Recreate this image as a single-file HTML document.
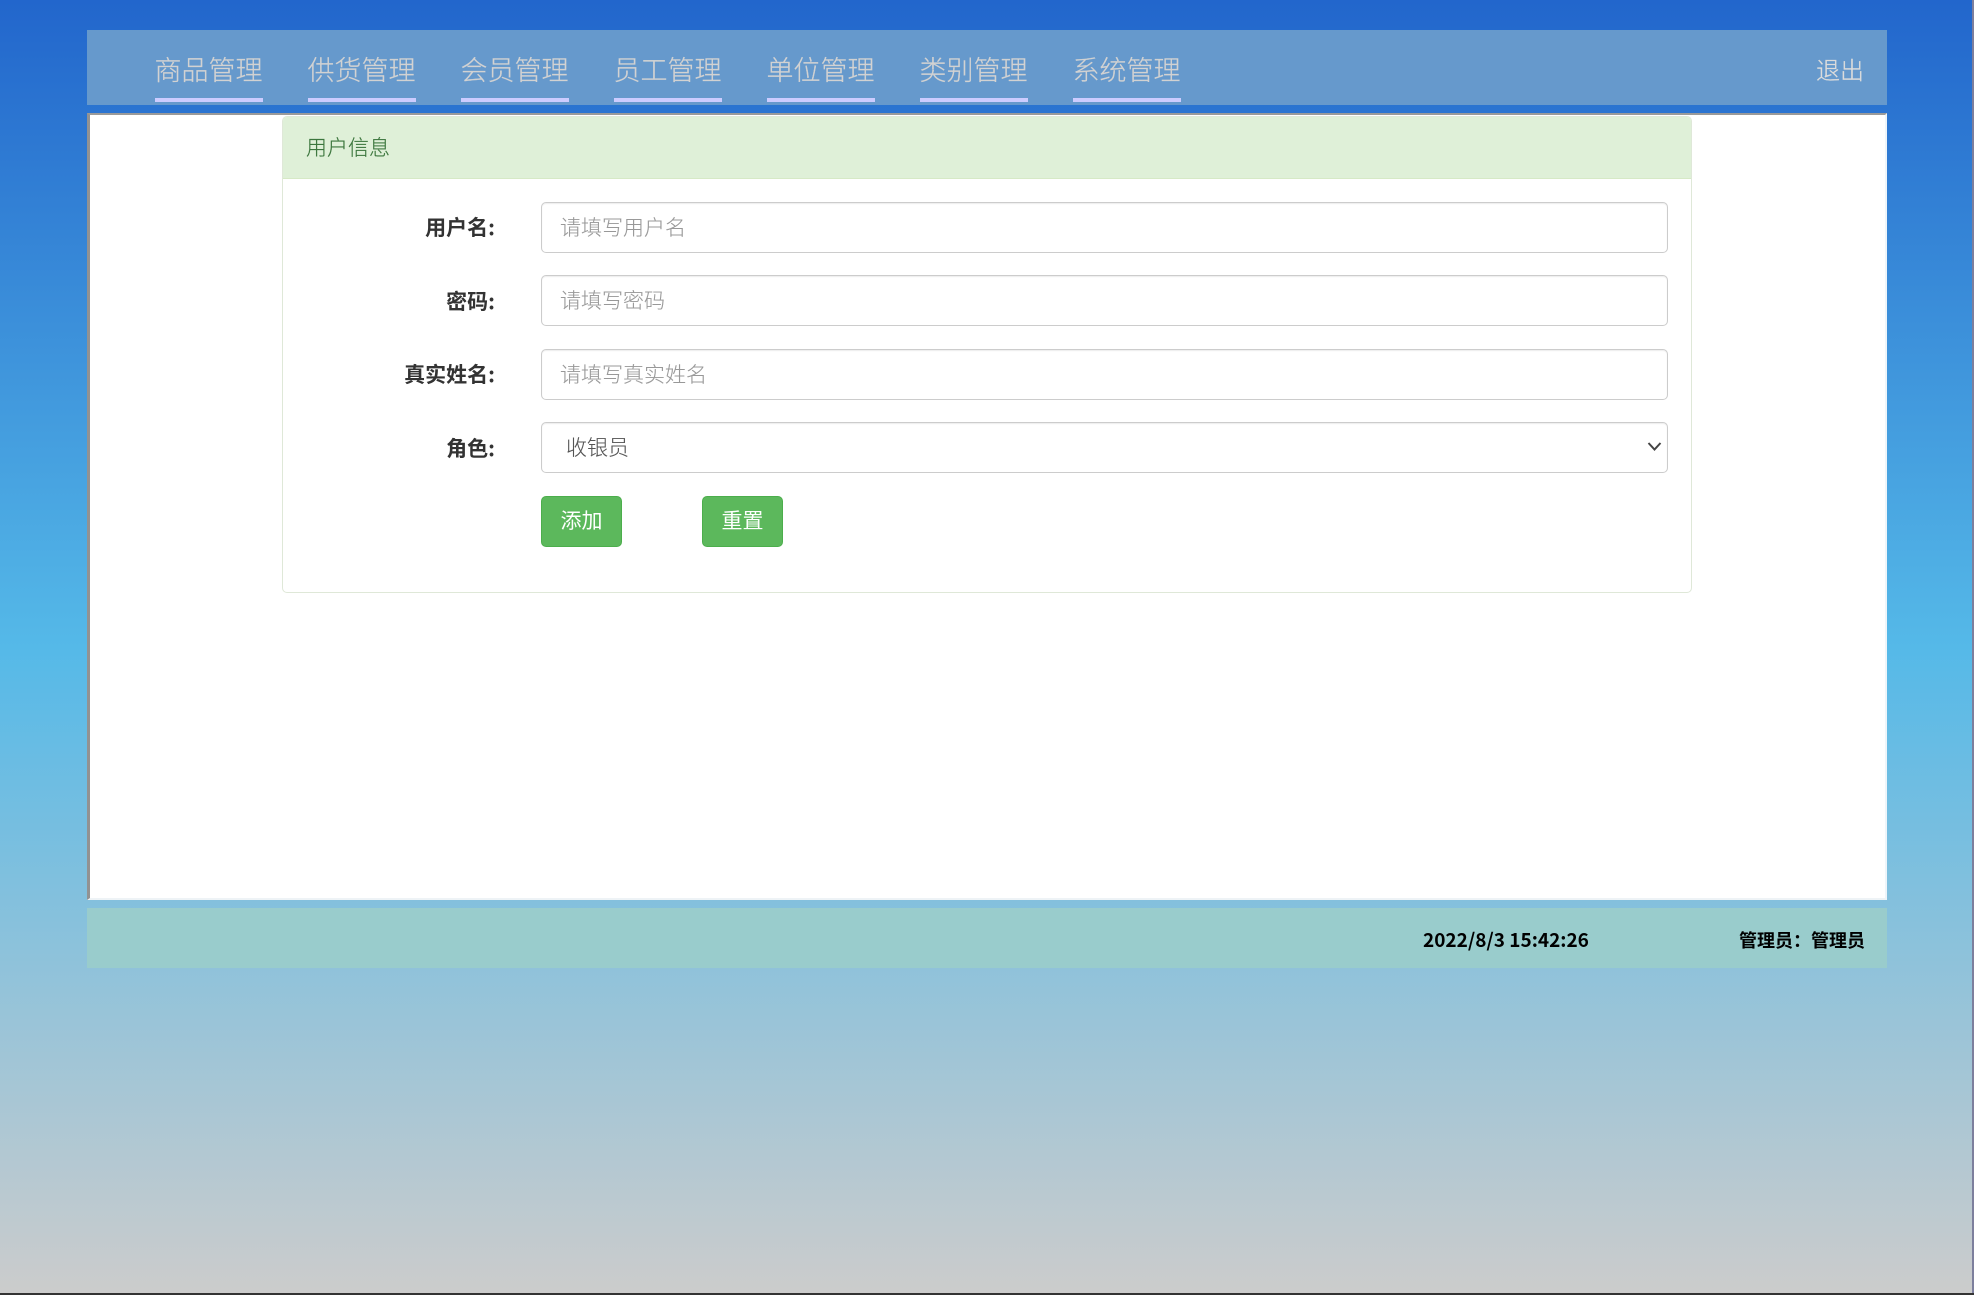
<!DOCTYPE html>
<html lang="zh-CN">
<head>
<meta charset="utf-8">
<title>用户信息</title>
<style>
html,body{margin:0;padding:0;width:1974px;height:1295px;overflow:hidden}
body{position:relative;font-family:"Liberation Sans","Noto Sans CJK SC",sans-serif;background:linear-gradient(to bottom,#2266cc 0,#55b9e8 50%,#cccccc 100%)}
div,a,span{position:absolute;box-sizing:border-box;white-space:nowrap}
.nav{left:87px;top:30px;width:1800px;height:75px;background:#6699cc}
.nav a{top:0;height:72px;line-height:78px;width:108px;font-size:27px;color:#d2d2d2;border-bottom:4px solid #ccccff;text-decoration:none;font-weight:300;font-family:"Noto Sans CJK SC",sans-serif;text-align:center;-webkit-text-stroke:.2px #d2d2d2;text-indent:-1px}
.main{left:87px;top:113px;width:1800px;height:787px;background:#fff;border-style:solid;border-width:2px 2px 2px 3px;border-color:#9a9a9a #eef5fa #eef3f6 #929292}
.panel{left:282px;top:116px;width:1410px;height:477px;border:1px solid #dfe8d8;border-radius:5px;background:#fff}
.head{left:0;top:0;width:1408px;height:62px;background:#dff0d8;border-bottom:1px solid #d6e9c6;border-radius:4px 4px 0 0;color:#3c763d;font-size:21px;line-height:60px;padding-left:23px;font-family:"Noto Sans CJK SC",sans-serif;font-weight:300;-webkit-text-stroke:.15px #3c763d}
.lab{left:300px;width:195px;text-align:right;font-size:21px;font-weight:700;color:#333;line-height:51px;height:51px;font-family:"Noto Sans CJK SC",sans-serif}
.inp{left:541px;width:1127px;height:51px;border:1px solid #ccc;border-radius:5px;box-shadow:inset 0 1px 1px rgba(0,0,0,.075);background:#fff;font-size:21px;line-height:49px;color:#999;padding-left:18px;font-family:"Noto Sans CJK SC",sans-serif;font-weight:300;-webkit-text-stroke:.1px currentColor}
.sel{color:#555;padding-left:24px}
.btn{top:496px;width:81px;height:51px;border:1px solid #4cae4c;border-radius:5px;background:#5cb85c;color:#fff;font-size:21px;line-height:47px;text-align:center;font-family:"Noto Sans CJK SC",sans-serif}
.foot{left:87px;top:908px;width:1800px;height:60px;background:#99cccc}
.ft{top:922px;line-height:36px;font-size:18px;font-weight:700;color:#000;font-family:"Noto Sans CJK SC",sans-serif}
.edge-r{left:1972px;top:0;width:2px;height:1295px;background:#7d7f9d}
.edge-b{left:0;top:1293px;width:1974px;height:2px;background:#333}
</style>
</head>
<body>
<div class="nav">
<a style="left:68px">商品管理</a>
<a style="left:221px">供货管理</a>
<a style="left:374px">会员管理</a>
<a style="left:527px">员工管理</a>
<a style="left:680px">单位管理</a>
<a style="left:833px">类别管理</a>
<a style="left:986px">系统管理</a>
<span style="left:1729px;top:0;font-size:24px;line-height:78px;color:#dcdcdc;font-weight:300;font-family:'Noto Sans CJK SC',sans-serif;-webkit-text-stroke:.25px #dcdcdc">退出</span>
</div>
<div class="main"></div>
<div class="panel"><div class="head">用户信息</div></div>
<div class="lab" style="top:202px">用户名:</div>
<div class="inp" style="top:202px">请填写用户名</div>
<div class="lab" style="top:276px">密码:</div>
<div class="inp" style="top:275px">请填写密码</div>
<div class="lab" style="top:349px">真实姓名:</div>
<div class="inp" style="top:349px">请填写真实姓名</div>
<div class="lab" style="top:423px">角色:</div>
<div class="inp sel" style="top:422px">收银员
<svg style="position:absolute;right:5px;top:18px" width="15" height="11" viewBox="0 0 15 11"><path d="M1.5 2 L7.5 8.5 L13.5 2" fill="none" stroke="#444" stroke-width="2"/></svg>
</div>
<div class="btn" style="left:541px">添加</div>
<div class="btn" style="left:702px">重置</div>
<div class="foot"></div>
<span class="ft" style="left:1423px;font-size:19px">2022/8/3 15:42:26</span>
<span class="ft" style="left:1739px">管理员：管理员</span>
<div class="edge-r"></div>
<div class="edge-b"></div>
</body>
</html>
